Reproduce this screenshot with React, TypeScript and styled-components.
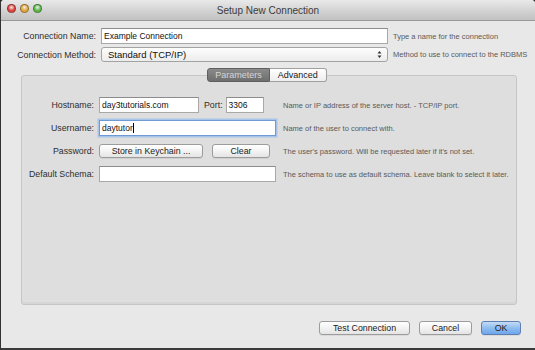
import React from "react";
import styled, { createGlobalStyle } from "styled-components";

const GlobalStyle = createGlobalStyle`
  html, body {
    margin: 0;
    padding: 0;
    background: #2b2b2b;
  }
  * {
    box-sizing: border-box;
  }
`;

const font = `"Lucida Grande", "Liberation Sans", Arial, sans-serif`;

const Window = styled.div`
  width: 535px;
  height: 350px;
  display: flex;
  flex-direction: column;
  background: #e8e8e8;
  border-left: 1px solid #333;
  border-bottom: 2px solid #3a3a3a;
  border-radius: 4px 4px 0 0;
  overflow: hidden;
  font-family: ${font};
  color: #2a2a2a;
`;

const TitleBar = styled.div`
  height: 21px;
  flex: none;
  position: relative;
  display: flex;
  align-items: center;
  justify-content: center;
  background: linear-gradient(#e9e9e9, #d0d0d0 60%, #c2c2c2);
  border-bottom: 1px solid #9a9a9a;
  font-size: 10px;
  color: #3c3c3c;
`;

const Lights = styled.div`
  position: absolute;
  left: 6px;
  top: 4px;
  display: flex;
  gap: 4px;
`;

const Light = styled.span<{ $c: string }>`
  width: 9px;
  height: 9px;
  border-radius: 50%;
  background: radial-gradient(circle at 50% 35%, #fff8 0, ${(p) => p.$c} 55%);
  border: 1px solid rgba(0, 0, 0, 0.35);
`;

const Body = styled.div`
  flex: 1;
  display: flex;
  flex-direction: column;
  padding: 7px 14px 0 0;
`;

const TopForm = styled.div`
  display: grid;
  grid-template-columns: 95px 287px 1fr;
  column-gap: 5px;
  row-gap: 3px;
  align-items: center;
`;

const Label = styled.label`
  font-size: 8.8px;
  text-align: right;
  white-space: nowrap;
  color: #2e2e2e;
`;

const Help = styled.span`
  font-size: 7.5px;
  color: #5a5a5a;
  white-space: nowrap;
`;

const Input = styled.div<{ $w?: number; $focus?: boolean }>`
  height: 16px;
  width: ${(p) => (p.$w ? `${p.$w}px` : "100%")};
  background: #fff;
  border: 1px solid #a8a8a8;
  border-top-color: #8c8c8c;
  font-size: 8.5px;
  line-height: 14px;
  padding: 0 2px;
  white-space: nowrap;
  overflow: hidden;
  color: #111;
  ${(p) =>
    p.$focus &&
    `border: 1px solid #6f9ad3; box-shadow: 0 0 0 1.5px #a7c4ea;`}
`;

const Caret = styled.span`
  display: inline-block;
  width: 1px;
  height: 10px;
  background: #000;
  vertical-align: -2px;
`;

const Select = styled.div`
  height: 15px;
  display: flex;
  align-items: center;
  justify-content: space-between;
  padding: 0 5px 0 6px;
  border: 1px solid #a3a3a3;
  border-radius: 3px;
  background: linear-gradient(#fdfdfd, #ececec);
  font-size: 9.5px;
  color: #111;
`;

const TabBar = styled.div`
  display: flex;
  justify-content: center;
  margin: 6px 0 -7px 12px;
  position: relative;
  z-index: 1;
`;

const Tab = styled.div<{ $active?: boolean }>`
  height: 14px;
  padding: 0 ${(p) => (p.$active ? 7 : 8)}px;
  font-size: 9px;
  line-height: 12px;
  border: 1px solid ${(p) => (p.$active ? "#5f5f5f" : "#a0a0a0")};
  background: ${(p) =>
    p.$active ? "linear-gradient(#8a8a8a, #6e6e6e)" : "linear-gradient(#fff, #ededed)"};
  color: ${(p) => (p.$active ? "#d6d6d6" : "#1a1a1a")};
  &:first-child {
    border-radius: 3px 0 0 3px;
  }
  &:last-child {
    border-radius: 0 3px 3px 0;
    border-left: none;
  }
`;

const Panel = styled.div`
  margin-left: 20px;
  margin-right: 4px;
  height: 230px;
  background: #dedede;
  border: 1px solid #c6c6c6;
  border-radius: 3px;
  box-shadow: inset 0 -2px 0 #d6d6d6;
  padding-top: 21px;
  display: grid;
  grid-template-columns: 72px 177px 1fr;
  grid-auto-rows: 16px;
  column-gap: 5px;
  row-gap: 7px;
  align-content: start;
  align-items: center;
`;

const PanelHelp = styled(Help)`
  padding-left: 2px;
`;

const Inline = styled.div`
  display: flex;
  align-items: center;
  gap: 5px;
`;

const InlineLabel = styled(Label)`
  margin-right: -2px;
`;

const Button = styled.div<{ $w: number; $primary?: boolean }>`
  width: ${(p) => p.$w}px;
  height: 14px;
  display: flex;
  align-items: center;
  justify-content: center;
  font-size: 8.8px;
  color: #1a1a1a;
  border: 1px solid ${(p) => (p.$primary ? "#5d7fb3" : "#9c9c9c")};
  border-radius: 3px;
  background: ${(p) =>
    p.$primary
      ? "linear-gradient(#c4dcf6, #8fbdf0 50%, #6da6ec)"
      : "linear-gradient(#ffffff, #f3f3f3 50%, #e4e4e4)"};
  box-shadow: 0 1px 0 rgba(0, 0, 0, 0.06);
`;

const ButtonRow = styled.div`
  display: flex;
  gap: 9px;
`;

const Footer = styled.div`
  display: flex;
  justify-content: flex-end;
  gap: 9px;
  padding-top: 16px;
`;

const Arrows = () => (
  <svg width="5" height="9" viewBox="0 0 5 9">
    <path d="M0.5 3.5 L2.5 1 L4.5 3.5 Z M0.5 5.5 L2.5 8 L4.5 5.5 Z" fill="#333" />
  </svg>
);

export default function App() {
  return (
    <>
      <GlobalStyle />
      <Window>
        <TitleBar>
          <Lights>
            <Light $c="#e0443e" />
            <Light $c="#e2a53a" />
            <Light $c="#5fb84a" />
          </Lights>
          Setup New Connection
        </TitleBar>
        <Body>
          <TopForm>
            <Label>Connection Name:</Label>
            <Input>Example Connection</Input>
            <Help>Type a name for the connection</Help>
            <Label>Connection Method:</Label>
            <Select>
              Standard (TCP/IP)
              <Arrows />
            </Select>
            <Help>Method to use to connect to the RDBMS</Help>
          </TopForm>

          <TabBar>
            <Tab $active>Parameters</Tab>
            <Tab>Advanced</Tab>
          </TabBar>

          <Panel>
            <Label>Hostname:</Label>
            <Inline>
              <Input $w={100}>day3tutorials.com</Input>
              <InlineLabel>Port:</InlineLabel>
              <Input $w={38}>3306</Input>
            </Inline>
            <PanelHelp>Name or IP address of the server host. - TCP/IP port.</PanelHelp>

            <Label>Username:</Label>
            <Input $focus>
              daytutor
              <Caret />
            </Input>
            <PanelHelp>Name of the user to connect with.</PanelHelp>

            <Label>Password:</Label>
            <ButtonRow>
              <Button $w={104}>Store in Keychain ...</Button>
              <Button $w={58}>Clear</Button>
            </ButtonRow>
            <PanelHelp>The user's password. Will be requested later if it's not set.</PanelHelp>

            <Label>Default Schema:</Label>
            <Input />
            <PanelHelp>The schema to use as default schema. Leave blank to select it later.</PanelHelp>
          </Panel>

          <Footer>
            <Button $w={91}>Test Connection</Button>
            <Button $w={53}>Cancel</Button>
            <Button $w={40} $primary>
              OK
            </Button>
          </Footer>
        </Body>
      </Window>
    </>
  );
}
